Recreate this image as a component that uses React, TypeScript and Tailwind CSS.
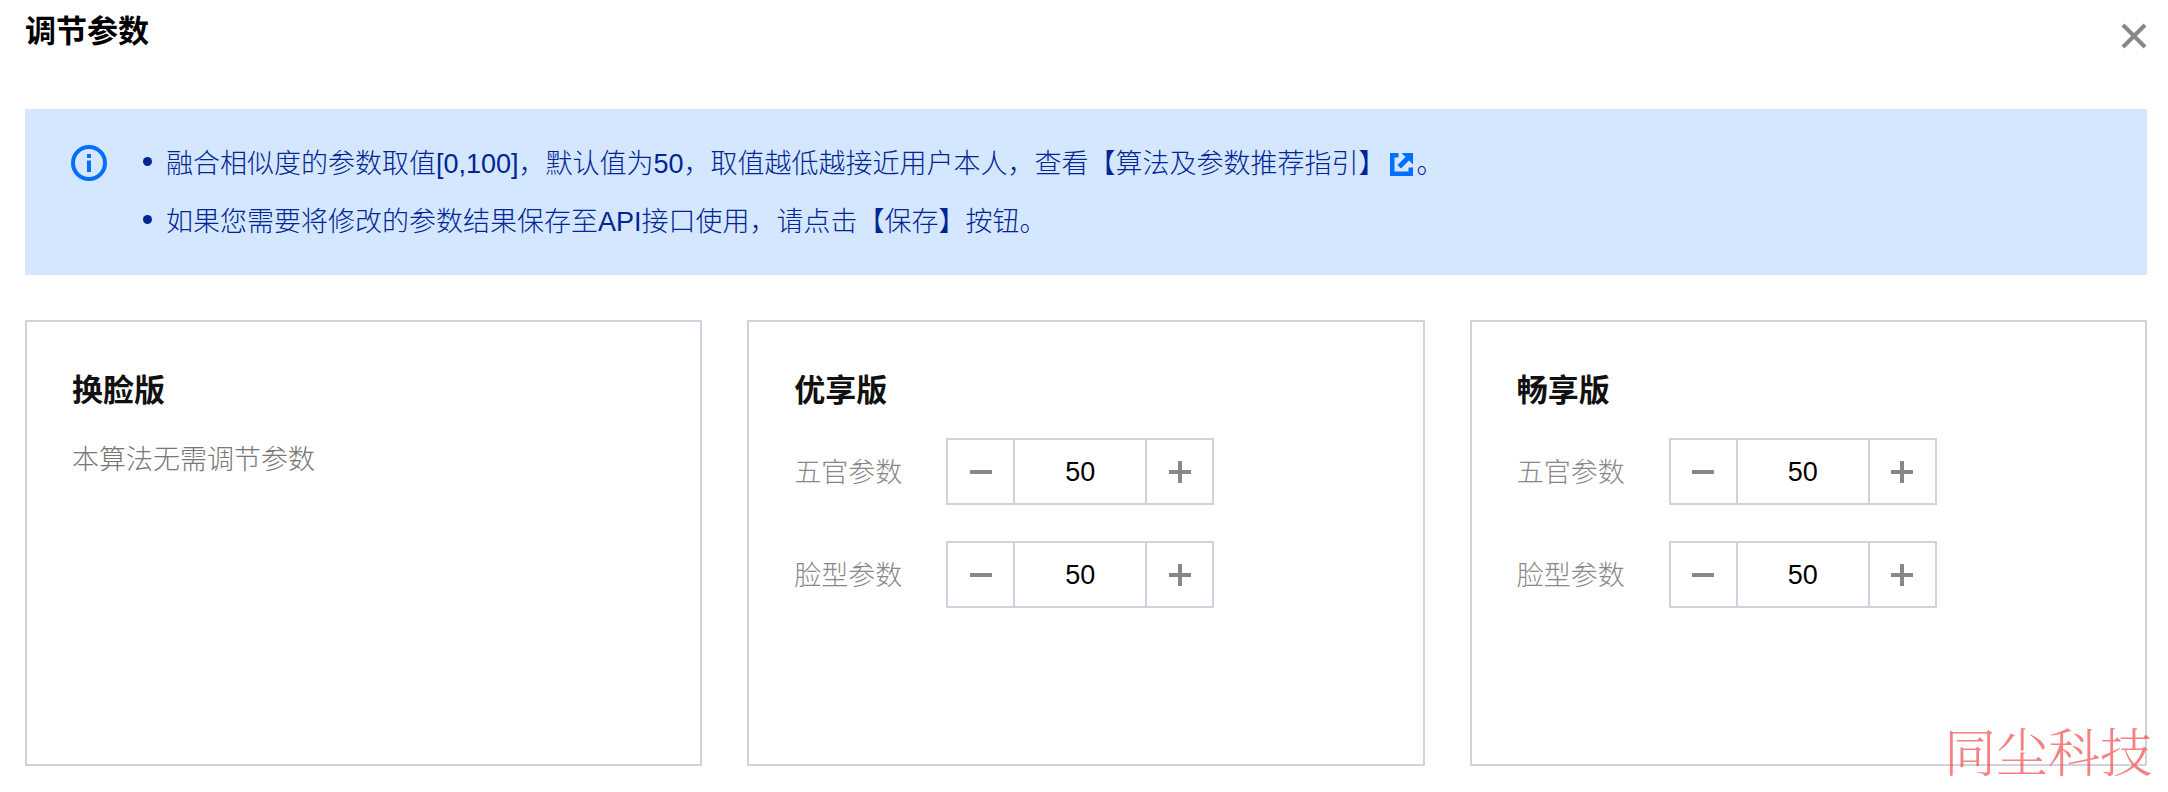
import { useId, useState } from "react";

const plans = [
  { name: "换脸版", params: [] },
  { name: "优享版", params: ["五官参数", "脸型参数"] },
  { name: "畅享版", params: ["五官参数", "脸型参数"] },
];

function InfoIcon() {
  return (
    <svg viewBox="0 0 36 36" className="size-9 shrink-0" aria-hidden="true">
      <circle cx="18" cy="18" r="16" fill="none" stroke="#006eff" strokeWidth="4" />
      <path d="M16 9h4v4h-4zM16 15.500h4V27h-4z" fill="#006eff" />
    </svg>
  );
}

function ExternalIcon() {
  return (
    <svg viewBox="0 0 23 23" className="size-[23px]" fill="#006eff" aria-hidden="true">
      <path d="M0 0h8.500v4.500h-4v14h14v-4H23V23H0z" />
      <path d="M11.500 0H23v11.500l-4-4-8 8-3.500-3.500 8-8z" />
    </svg>
  );
}

function ParamStepper({ label }: { label: string }) {
  const id = useId();
  const [value, setValue] = useState(50);

  const update = (next: number) => {
    if (!Number.isNaN(next)) setValue(Math.min(100, Math.max(0, next)));
  };

  return (
    <div className="flex items-center">
      <label htmlFor={id} className="w-[152px] shrink-0 pt-0.5 font-light text-[#888]">
        {label}
      </label>
      <div className="flex h-[67px] w-[268px] border-2 border-[#cfd3de]">
        <button
          type="button"
          aria-label={`减少${label}`}
          onClick={() => update(value - 1)}
          className="flex flex-1 items-center justify-center"
        >
          <svg viewBox="0 0 22 22" className="size-[22px]" aria-hidden="true">
            <path d="M0 11h22" stroke="#888" strokeWidth="4" />
          </svg>
        </button>
        <input
          id={id}
          type="text"
          inputMode="numeric"
          value={value}
          onChange={(e) => update(Number(e.target.value))}
          className="w-[134px] border-x-2 border-[#cfd3de] text-center text-black outline-none"
        />
        <button
          type="button"
          aria-label={`增加${label}`}
          onClick={() => update(value + 1)}
          className="flex flex-1 items-center justify-center"
        >
          <svg viewBox="0 0 22 22" className="size-[22px]" aria-hidden="true">
            <path d="M0 11h22M11 0v22" stroke="#888" strokeWidth="4" />
          </svg>
        </button>
      </div>
    </div>
  );
}

export default function App() {
  return (
    <main className="relative bg-white pt-2 pr-[21px] pb-[26px] pl-[25px] font-['Liberation_Sans','Noto_Sans_CJK_SC',sans-serif] text-[27px] leading-10">
      {/* Header */}
      <header className="flex h-[101px] items-start justify-between">
        <h1 className="text-[31px] leading-12 font-bold text-black">调节参数</h1>
        <button type="button" aria-label="关闭" className="pt-[15px]">
          <svg viewBox="0 0 26 26" className="size-[26px]" aria-hidden="true">
            <path d="M2 2l22 22M24 2L2 24" stroke="#888" strokeWidth="4" />
          </svg>
        </button>
      </header>

      {/* Notice */}
      <section className="flex gap-9 bg-[#d5e7ff] px-[46px] pt-[26px] pb-6 text-[#002594]">
        <div className="pt-[10px]">
          <InfoIcon />
        </div>
        <ul className="font-light leading-[58px]">
          <li className="flex gap-[14px]">
            <span className="mt-[22px] size-[9px] shrink-0 rounded-full bg-[#002594]" />
            <span className="flex items-center">
              融合相似度的参数取值[0,100]，默认值为50，取值越低越接近用户本人，查看
              <a href="#guide" className="flex items-center gap-1">
                【算法及参数推荐指引】
                <ExternalIcon />
              </a>
              <span className="pl-1">。</span>
            </span>
          </li>
          <li className="flex gap-[14px]">
            <span className="mt-[22px] size-[9px] shrink-0 rounded-full bg-[#002594]" />
            <span>如果您需要将修改的参数结果保存至API接口使用，请点击【保存】按钮。</span>
          </li>
        </ul>
      </section>

      {/* Plans */}
      <section className="mt-[45px] grid grid-cols-3 gap-[45px]">
        {plans.map(({ name, params }) => (
          <article key={name} className="min-h-[446px] border-2 border-[#cfd3de] px-[45px] pt-[45px]">
            <h2 className="text-[31px] leading-12 font-bold text-[#111]">{name}</h2>
            {params.length === 0 ? (
              <p className="mt-[25px] font-light text-[#777]">本算法无需调节参数</p>
            ) : (
              <div className="mt-[23px] flex flex-col gap-9">
                {params.map((label) => (
                  <ParamStepper key={label} label={label} />
                ))}
              </div>
            )}
          </article>
        ))}
      </section>

      {/* Watermark */}
      <p className="pointer-events-none absolute right-4 bottom-3 font-['Noto_Serif_CJK_SC','Noto_Sans_CJK_SC',serif] text-[52px] leading-[60px] font-light text-[#f44a4f]/70">
        同尘科技
      </p>
    </main>
  );
}
